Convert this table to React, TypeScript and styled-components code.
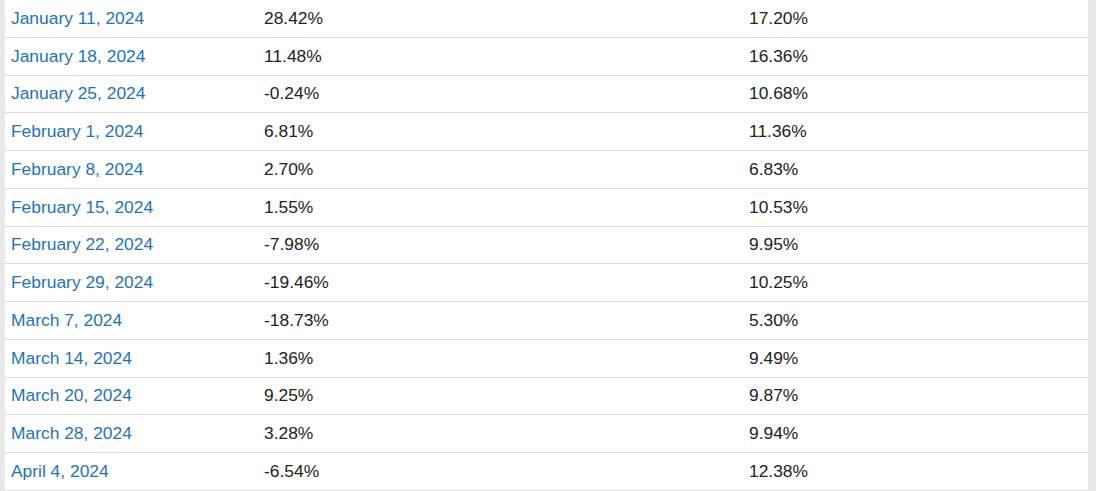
import React from 'react';
import styled, { createGlobalStyle } from 'styled-components';

const GlobalStyle = createGlobalStyle`
  html, body {
    margin: 0;
    padding: 0;
    background: #e9e9e9;
    overflow: hidden;
  }
`;

const Page = styled.div`
  height: 491px;
  padding: 0 8px 0 5px;
  overflow: hidden;
`;

const Table = styled.div`
  background: #ffffff;
  font-family: "Liberation Sans", Arial, sans-serif;
  font-size: 17.4px;
`;

const Row = styled.div`
  display: grid;
  grid-template-columns: 253px 485px 1fr;
  height: 37.75px;
  box-sizing: border-box;
  border-bottom: 1px solid #dddddd;
  align-items: center;
`;

const Cell = styled.div<{ $link?: boolean }>`
  padding: 0 6px;
  color: ${p => (p.$link ? '#1e73be' : '#222222')};
  white-space: nowrap;
`;

const rows: [string, string, string][] = [
  ['January 11, 2024', '28.42%', '17.20%'],
  ['January 18, 2024', '11.48%', '16.36%'],
  ['January 25, 2024', '-0.24%', '10.68%'],
  ['February 1, 2024', '6.81%', '11.36%'],
  ['February 8, 2024', '2.70%', '6.83%'],
  ['February 15, 2024', '1.55%', '10.53%'],
  ['February 22, 2024', '-7.98%', '9.95%'],
  ['February 29, 2024', '-19.46%', '10.25%'],
  ['March 7, 2024', '-18.73%', '5.30%'],
  ['March 14, 2024', '1.36%', '9.49%'],
  ['March 20, 2024', '9.25%', '9.87%'],
  ['March 28, 2024', '3.28%', '9.94%'],
  ['April 4, 2024', '-6.54%', '12.38%'],
];

const App: React.FC = () => (
  <Page>
    <GlobalStyle />
    <Table>
      {rows.map(([date, a, b]) => (
        <Row key={date}>
          <Cell $link>{date}</Cell>
          <Cell>{a}</Cell>
          <Cell>{b}</Cell>
        </Row>
      ))}
    </Table>
  </Page>
);

export default App;
